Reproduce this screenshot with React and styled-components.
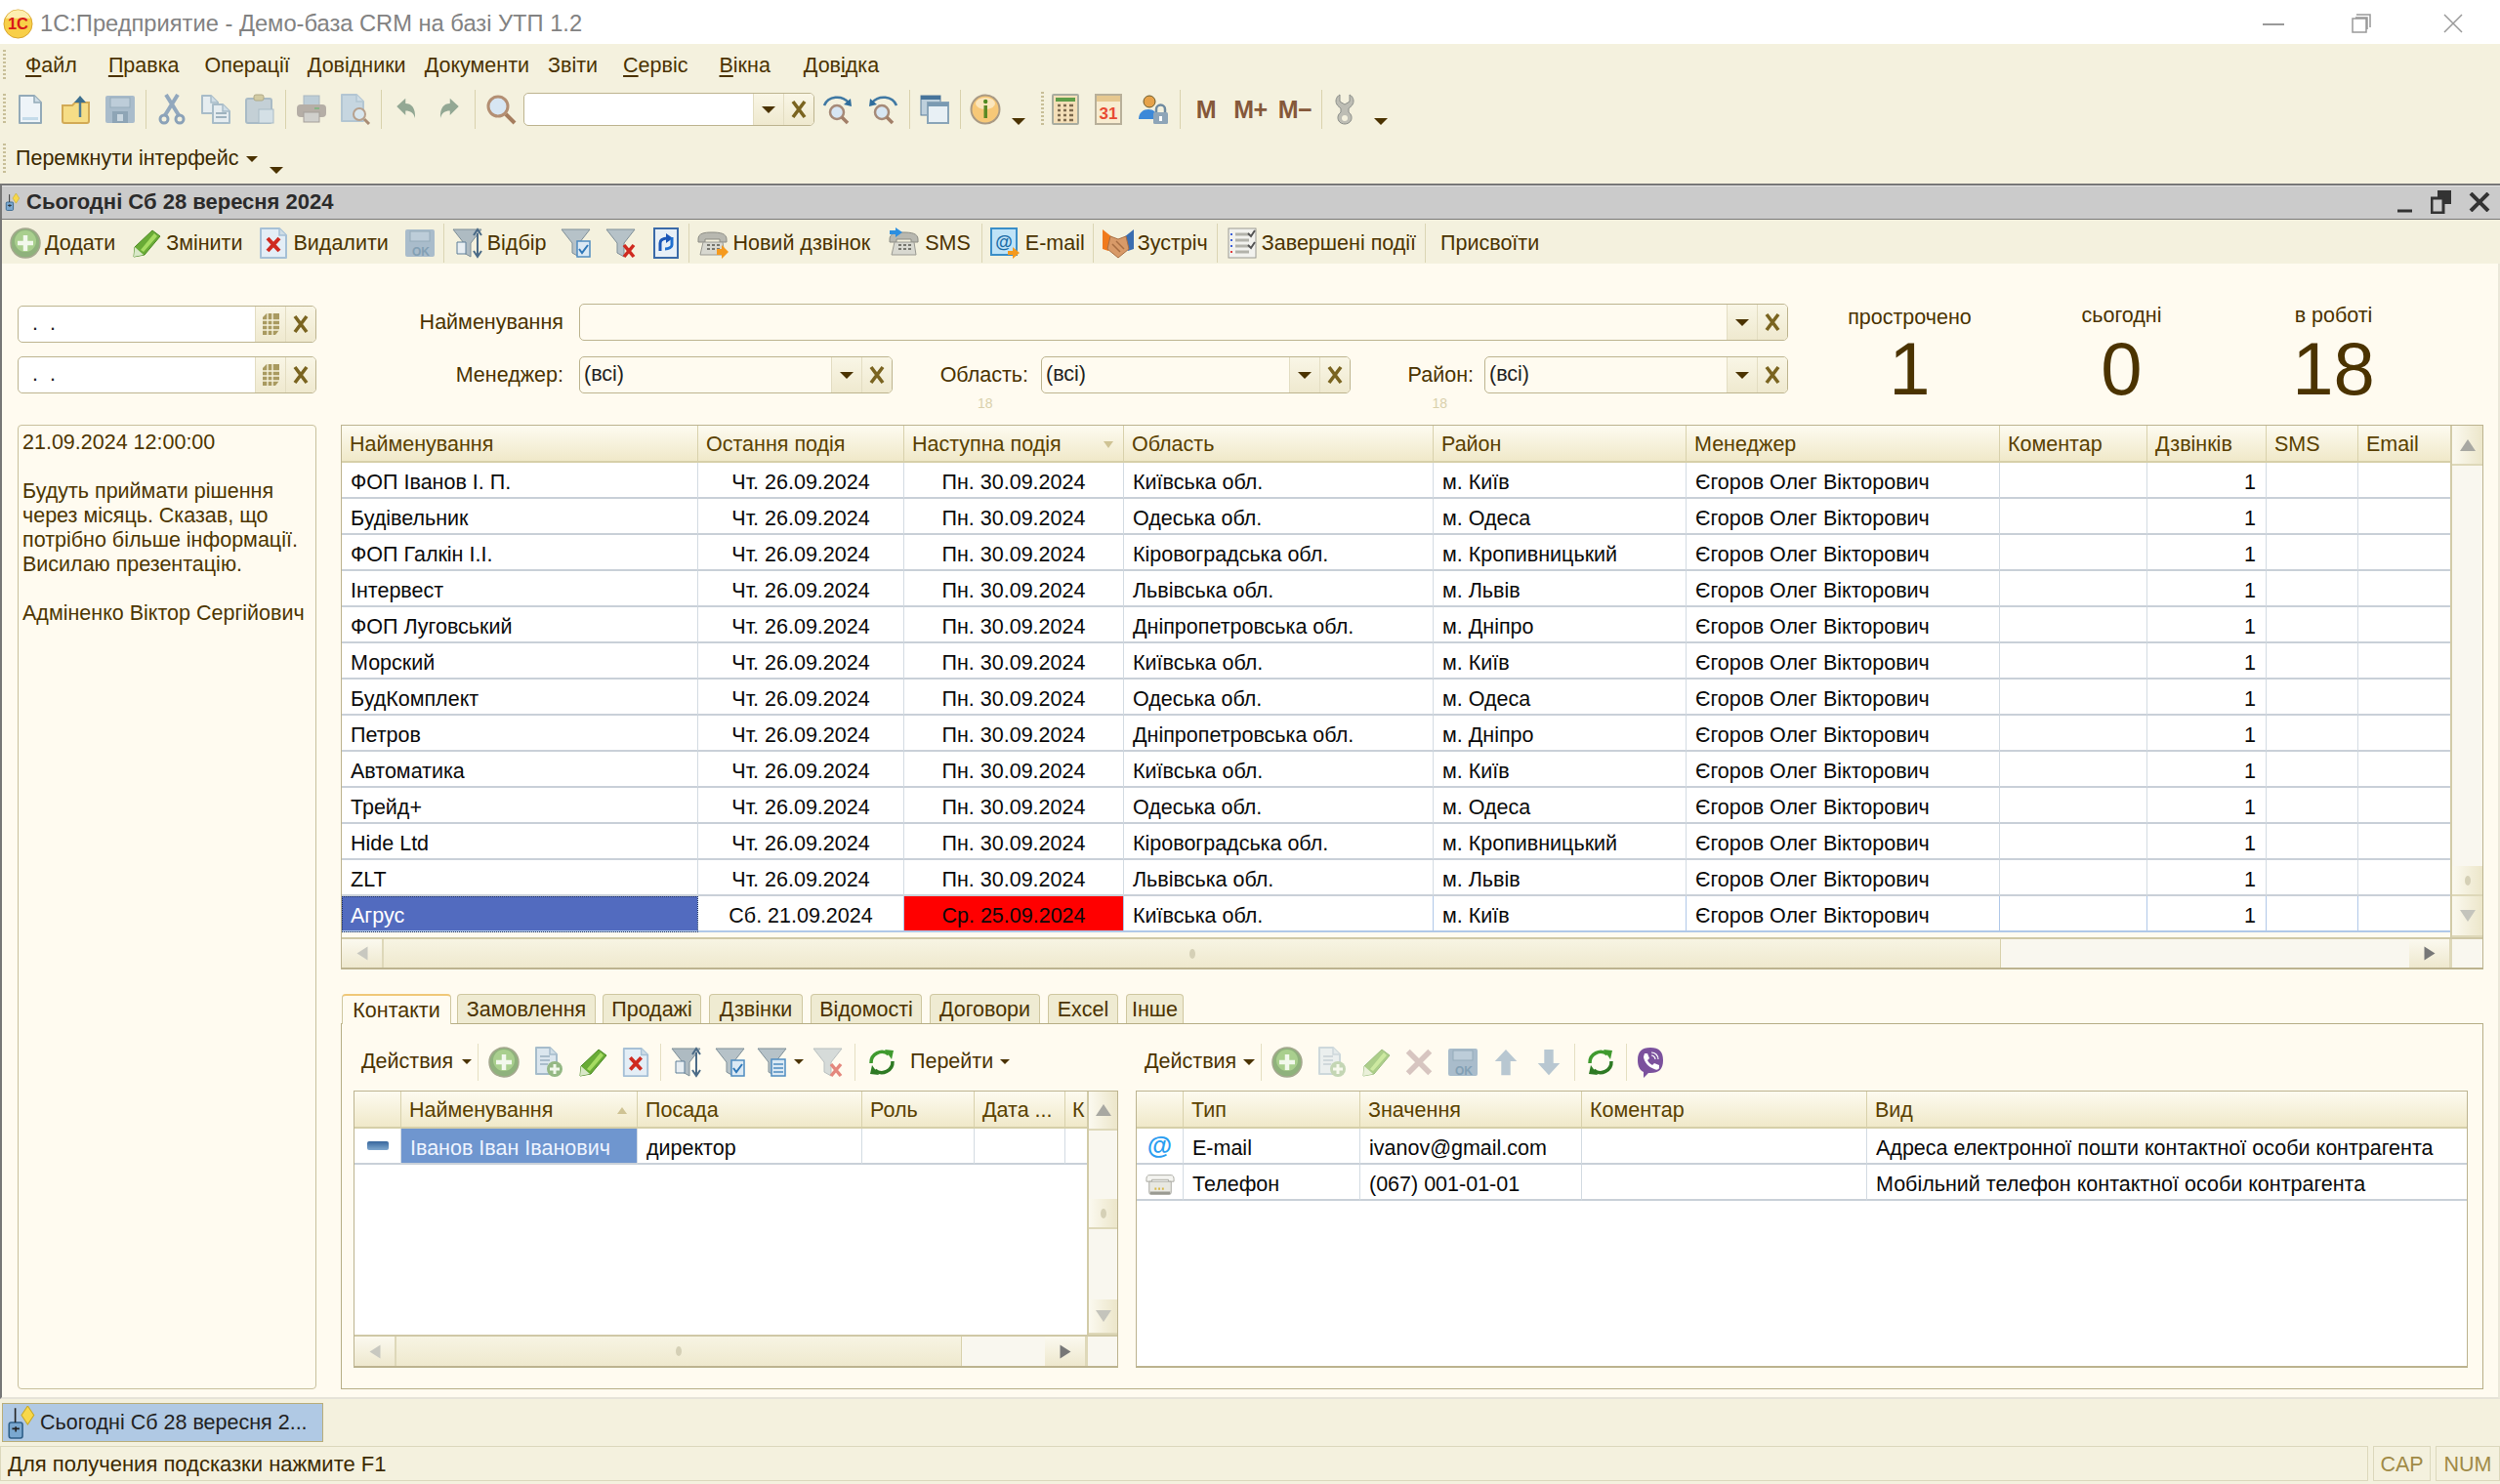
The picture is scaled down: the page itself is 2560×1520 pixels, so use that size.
import React from 'react';
import styled, { createGlobalStyle } from 'styled-components';

const GlobalStyle = createGlobalStyle`
  html, body { margin: 0; padding: 0; background: #fff; }
  * { box-sizing: border-box; }
  body { font-family: "Liberation Sans", Arial, sans-serif; font-size: 21.5px; color: #4b3300; }
`;

const Page = styled.div`
  width: 2560px;
  height: 1520px;
  display: flex;
  flex-direction: column;
  overflow: hidden;
`;

const TitleBar = styled.div`
  height: 45px;
  background: #fff;
  display: flex;
  align-items: center;
  padding: 3px 0 0 3px;
  color: #828282;
  font-size: 23.7px;
`;
const TitleText = styled.span`
  margin-left: 7px;
  flex: 1;
`;
const WinButtons = styled.div`
  display: flex;
  align-items: center;
`;
const WinBtn = styled.div`
  width: ${p => p.$w}px;
  display: flex;
  justify-content: center;
`;

const MenuBar = styled.div`
  height: 43px;
  background: #f4f1de;
  display: flex;
  align-items: center;
  padding: 1px 0 0 3px;
`;
const Grip = styled.span`
  width: 3px;
  height: ${p => p.$h || 32}px;
  flex: none;
  background: repeating-linear-gradient(to bottom, #c8bf98 0 2px, transparent 2px 4px);
`;
const MenuItem = styled.span`
  margin-left: ${p => p.$ml}px;
  color: #4b3300;
  u { text-underline-offset: 3px; }
`;

const ToolBar = styled.div`
  height: 48px;
  background: #f4f1de;
  display: flex;
  align-items: center;
  padding-left: 3px;
`;
const ToolCell = styled.div`
  width: ${p => p.$w || 45}px;
  height: 34px;
  flex: none;
  display: flex;
  align-items: center;
  justify-content: center;
`;
const ToolSep = styled.span`
  width: ${p => p.$w || 8}px;
  height: 40px;
  flex: none;
  position: relative;
  &::after {
    content: '';
    position: absolute;
    left: 50%;
    top: 0;
    bottom: 0;
    width: 1px;
    background: #d9d2ad;
  }
`;
const Memo = styled.span`
  font-weight: bold;
  font-size: 25px;
  color: #85583a;
  letter-spacing: -0.5px;
`;
const Caret = styled.span`
  display: inline-block;
  flex: none;
  width: 0;
  height: 0;
  border-left: ${p => p.$s || 6}px solid transparent;
  border-right: ${p => p.$s || 6}px solid transparent;
  border-top: ${p => p.$s || 6}px solid ${p => p.$color || '#4b3300'};
  margin-left: ${p => p.$ml || 0}px;
  margin-top: ${p => p.$mt || 0}px;
`;
const SortMark = styled.span`
  flex: none;
  width: 0;
  height: 0;
  border-left: 5px solid transparent;
  border-right: 5px solid transparent;
  border-${p => (p.$up ? 'bottom' : 'top')}: 7px solid #cfc394;
`;

const SwitchBar = styled.div`
  height: 52px;
  background: #f4f1de;
  display: flex;
  align-items: center;
  padding: 1px 0 0 3px;
`;
const SwitchText = styled.span`
  margin-left: 10px;
  color: #3c2a00;
`;

const WinHeader = styled.div`
  height: 37px;
  background: #cbcbcb;
  border-top: 2px solid #777;
  box-shadow: inset 0 1px 0 #e6e6e6;
  border-bottom: 1px solid #777;
  border-left: 2px solid #777;
  display: flex;
  align-items: center;
  padding: 0 0 0 2px;
`;
const WinTitle = styled.span`
  font-weight: bold;
  font-size: 22px;
  color: #2b2b2b;
  margin-left: 5px;
  flex: 1;
`;

const CommandBar = styled.div`
  height: 45px;
  background: #f4f1de;
  border-left: 2px solid #777;
  display: flex;
  align-items: center;
  padding-top: 3px;
`;
const CmdButton = styled.div`
  display: flex;
  align-items: center;
  gap: ${p => p.$gap ?? 4}px;
  padding: 0 ${p => p.$pad ?? 8}px;
  color: #4b3300;
  white-space: nowrap;
`;
const CmdSep = styled.span`
  width: 1px;
  height: 40px;
  flex: none;
  background: #dbd5b4;
`;

const Body = styled.div`
  height: 1163px;
  background: #fffbf0;
  border-left: 2px solid #777;
  border-right: 2px solid #ebe8da;
  border-bottom: 2px solid #e6e3d8;
  padding: 41px 15px 0 16px;
  display: grid;
  grid-template-columns: 306px 2194px;
  column-gap: 25px;
  align-items: start;
`;
const LeftCol = styled.div`
  display: flex;
  flex-direction: column;
  padding-top: 2px;
`;
const Field = styled.div`
  width: ${p => p.$w}px;
  height: ${p => p.$h || 38}px;
  flex: none;
  display: flex;
  background: ${p => p.$bg || '#fff'};
  border: 1px solid #bdb48f;
  border-radius: 5px;
  margin-top: ${p => p.$mt || 0}px;
  overflow: hidden;
`;
const FieldText = styled.span`
  flex: 1;
  padding: 0 ${p => p.$pad ?? 4}px;
  line-height: ${p => p.$lh || 35}px;
  color: #222;
  white-space: pre;
`;
const FieldBtn = styled.span`
  width: 31px;
  flex: none;
  display: flex;
  align-items: center;
  justify-content: center;
  border-left: 1px solid #e3ddc2;
  background: linear-gradient(to bottom, #f9f6e6, #efe9cf);
`;
const NotePanel = styled.div`
  margin-top: 32px;
  height: 988px;
  border: 1px solid #c8c09c;
  border-radius: 4px;
  padding: 5px 0 0 4px;
  line-height: 25px;
  color: #4d3600;
`;
const NoteLine = styled.div`
  min-height: 25px;
  white-space: nowrap;
`;

const MainCol = styled.div`
  display: flex;
  flex-direction: column;
`;
const TopArea = styled.div`
  height: 124px;
  display: flex;
`;
const FilterForm = styled.div`
  width: 1482px;
  flex: none;
`;
const FilterRow = styled.div`
  display: flex;
  align-items: center;
  margin-top: ${p => p.$mt || 0}px;
`;
const FilterLabel = styled.span`
  width: ${p => p.$w}px;
  flex: none;
  text-align: right;
  padding-right: ${p => p.$pr}px;
  white-space: nowrap;
  color: #4b3300;
`;
const HintRow = styled.div`
  display: flex;
  padding-left: 652px;
  margin-top: 3px;
  font-size: 14px;
  line-height: 14px;
  color: #d9d0ab;
`;
const Hint = styled.span`
  margin-right: 450px;
`;
const Stats = styled.div`
  margin-left: 16px;
  display: grid;
  grid-template-columns: repeat(3, 217px);
`;
const Stat = styled.div`
  display: flex;
  flex-direction: column;
  align-items: center;
  padding-top: ${p => p.$pt || 0}px;
`;
const StatLabel = styled.span`
  line-height: 24px;
  color: #4b3300;
`;
const StatValue = styled.span`
  font-size: 76px;
  line-height: 84px;
  margin-top: ${p => p.$mt}px;
  color: #4b3300;
`;

const TableBox = styled.div`
  display: flex;
  flex-direction: column;
  width: ${p => p.$w}px;
  height: ${p => p.$h}px;
  background: ${p => p.$bg || '#fff'};
  border: 2px solid #bcb38f;
  border-width: 1px 1px 2px 1px;
  overflow: hidden;
`;
const TableMain = styled.div`
  flex: 1;
  min-height: 0;
  display: flex;
`;
const TableRows = styled.div`
  flex: 1;
  min-width: 0;
  background: ${p => p.$bg || '#fff'};
`;
const HeadRow = styled.div`
  display: grid;
  grid-template-columns: ${p => p.$cols};
  height: ${p => p.$h || 38}px;
  background: linear-gradient(to bottom, #fdfbf0, #f0e9c9);
  border-bottom: 2px solid #d6cfa8;
`;
const HeadCell = styled.div`
  display: flex;
  align-items: center;
  justify-content: space-between;
  padding: 3px 10px 0 ${p => p.$pl ?? 8}px;
  border-right: 1px solid #d8d1ac;
  color: #5a4100;
  white-space: nowrap;
  overflow: hidden;
  &:last-child { border-right: 0; }
`;
const DataRow = styled.div`
  display: grid;
  grid-template-columns: ${p => p.$cols};
  height: 37px;
`;
const DataCell = styled.div`
  display: flex;
  align-items: center;
  justify-content: ${p => p.$align || 'flex-start'};
  padding: 5px ${p => (p.$align === 'flex-end' ? 10 : 9)}px 0 9px;
  background: ${p => p.$bg || 'transparent'};
  color: ${p => p.$color || '#0a0a0a'};
  border-right: 1px solid ${p => (p.$active ? '#b0c8e8' : '#d3dbe2')};
  border-bottom: 2px solid ${p => (p.$active ? '#b0c8e8' : '#c9d0d8')};
  outline: ${p => (p.$focus ? '1px dotted #20305f' : '0')};
  outline-offset: -1px;
  white-space: nowrap;
  overflow: hidden;
  &:last-child { border-right: 0; }
`;

const VBar = styled.div`
  width: ${p => p.$w}px;
  flex: none;
  display: flex;
  flex-direction: column;
  background: #f9f7ef;
  border-left: 2px solid #d2cba8;
`;
const ScrollBtn = styled.div`
  height: ${p => p.$h}px;
  flex: none;
  display: flex;
  align-items: center;
  justify-content: center;
  background: linear-gradient(to right, #fbf9ef, #ece6ca);
  border-bottom: 2px solid #ded8b9;
`;
const ScrollGap = styled.div`
  flex: ${p => (p.$h !== undefined ? 'none' : 1)};
  height: ${p => (p.$h !== undefined ? `${p.$h}px` : 'auto')};
`;
const HBar = styled.div`
  height: ${p => p.$h}px;
  flex: none;
  display: flex;
  background: #f9f7ef;
  border-top: 2px solid #cfc8a6;
`;
const HBtn = styled.div`
  width: ${p => p.$w}px;
  flex: none;
  display: flex;
  align-items: center;
  justify-content: center;
  background: linear-gradient(to bottom, #fbf9ef, #eee8ce);
  border-right: 2px solid #ded8b9;
`;
const HThumb = styled.div`
  width: ${p => p.$w}px;
  flex: none;
  display: flex;
  align-items: center;
  justify-content: center;
  background: linear-gradient(to bottom, #f7f4e3, #efe9ce);
  border-right: 1px solid #d8d1ac;
`;
const HCorner = styled.div`
  flex: 1;
`;
const ScrollCorner = styled.div`
  width: ${p => p.$w}px;
  flex: none;
  background: #f9f7ef;
  border-left: 1px solid #ded8b9;
`;
const GripDot = styled.span`
  width: 6px;
  height: 10px;
  border-radius: 50%;
  background: #d5d0b6;
`;
const ScrollArrow = styled.span`
  width: 0;
  height: 0;
  border-left: ${p => p.$size}px solid transparent;
  border-right: ${p => p.$size}px solid transparent;
  border-bottom: ${p => p.$size * 1.6}px solid ${p => p.$color || '#a8a8a2'};
  transform: rotate(${p => p.$rot || 0}deg);
`;

const TabStrip = styled.div`
  margin-top: 25px;
  height: 30px;
  display: flex;
  padding-left: 1px;
`;
const Tab = styled.div`
  width: ${p => p.$w}px;
  margin-right: ${p => p.$mr}px;
  margin-bottom: ${p => (p.$active ? '-1px' : '0')};
  padding-top: 2px;
  background: ${p => (p.$active ? '#fffbf0' : '#efebd2')};
  border: 1px solid #cfc7a0;
  border-top: ${p => (p.$active ? '2px solid #f0c878' : '1px solid #cfc7a0')};
  border-bottom: 0;
  border-radius: 4px 4px 0 0;
  display: flex;
  align-items: center;
  justify-content: center;
  color: #4b3300;
  white-space: nowrap;
  position: relative;
  z-index: ${p => (p.$active ? 1 : 0)};
`;
const TabPanel = styled.div`
  height: 375px;
  border: 1px solid #b7ae86;
  padding: 0 15px 20px 12px;
  display: grid;
  grid-template-columns: 783px 1364px;
  column-gap: 18px;
`;
const SubPane = styled.div`
  display: flex;
  flex-direction: column;
`;
const SubTools = styled.div`
  height: 68px;
  display: flex;
  align-items: center;
  padding-top: 9px;
`;
const SubBtn = styled.div`
  width: ${p => p.$w}px;
  height: 34px;
  flex: none;
  display: flex;
  align-items: center;
  justify-content: ${p => p.$justify || 'center'};
  padding-left: ${p => p.$pl || 0}px;
  color: #4b3300;
  white-space: nowrap;
`;
const SubSep = styled.span`
  width: 1px;
  height: 38px;
  flex: none;
  margin: 0 ${p => p.$m ?? 5}px;
  background: #e5dfc2;
`;
const AtSign = styled.span`
  color: #2a9df0;
  font-weight: bold;
  font-size: 26px;
  margin-top: -5px;
`;
const RowMarker = styled.span`
  width: 22px;
  height: 9px;
  margin-top: -5px;
  border-radius: 2px;
  background: linear-gradient(to bottom, #37669c, #7fa8cf);
`;

const TaskBar = styled.div`
  height: 47px;
  background: #f4f1de;
  padding: 4px 0 3px 2px;
`;
const TaskTab = styled.div`
  width: 329px;
  height: 40px;
  background: #b0c9e4;
  border: 1px solid #b9ae7a;
  display: flex;
  align-items: center;
  padding-left: 2px;
  color: #222;
  gap: 2px;
  white-space: nowrap;
`;
const StatusBar = styled.div`
  height: 40px;
  background: #f4f1de;
  display: flex;
  padding: 1px 0 3px;
  gap: 5px;
`;
const StatusCell = styled.div`
  width: ${p => p.$w}px;
  flex: ${p => (p.$w ? 'none' : 1)};
  border: 1px solid #dcd8bc;
  display: flex;
  align-items: center;
  justify-content: ${p => (p.$w ? 'center' : 'flex-start')};
  padding: 2px 0 0 ${p => (p.$w ? 0 : 7)}px;
  font-size: ${p => (p.$w ? 21.5 : 22)}px;
  color: ${p => (p.$w ? '#a08a46' : '#3c2a00')};
`;

const Svg = styled.svg`
  flex: none;
  display: block;
  opacity: ${p => (p.$faded ? 0.55 : 1)};
`;
const Ico = ({ s = 32, faded, w, h, box = '0 0 32 32', children }) => (
  <Svg viewBox={box} width={w || s} height={h || s} $faded={faded}>{children}</Svg>
);

const Paper = ({ x = 5, y = 2, w = 22, h = 28, fill = '#eef4f8', stroke = '#93aab8' }) => (
  <>
    <path d={`M${x} ${y}h${w - 7}l7 7v${h - 7}H${x}z`} fill={fill} stroke={stroke} strokeWidth="2" strokeLinejoin="round" />
    <path d={`M${x + w - 7} ${y}v7h7`} fill="#cfdde6" stroke={stroke} strokeWidth="1.5" />
  </>
);
const NewDocIcon = () => <Ico><Paper /><path d="M8 24h16v3H8z" fill="#c4dbea" /></Ico>;
const FolderIcon = () => (
  <Ico>
    <path d="M2 12h10l3-3h14v19a2 2 0 0 1-2 2H4a2 2 0 0 1-2-2z" fill="#f6dd86" stroke="#d2aa55" strokeWidth="2" />
    <path d="M20 24V8" stroke="#4f7c96" strokeWidth="2.5" />
    <path d="M14 9l6-7 6 7z" fill="#3d6f8e" />
  </Ico>
);
const FloppyIcon = ({ ok, faded = false }) => (
  <Ico faded={faded}>
    <rect x="1" y="2" width="30" height="28" rx="2" fill="#a9bccb" />
    <rect x="6" y="4" width="20" height="10" fill="#bdcdd9" stroke="#95abba" />
    {ok ? (
      <text x="8" y="29" fontSize="12" fontWeight="bold" fill="#83a0b4" fontFamily="Liberation Sans">OK</text>
    ) : (
      <>
        <rect x="8" y="18" width="16" height="12" fill="#8ea5b6" />
        <rect x="13" y="21" width="6" height="7" fill="#c8d6df" />
      </>
    )}
  </Ico>
);
const ScissorsIcon = () => (
  <Ico>
    <path d="M10 1l13 21M22 1L9 22" stroke="#92a8bd" strokeWidth="4" />
    <circle cx="8" cy="26" r="4" fill="none" stroke="#8ba2b8" strokeWidth="3" />
    <circle cx="24" cy="26" r="4" fill="none" stroke="#8ba2b8" strokeWidth="3" />
  </Ico>
);
const CopyIcon = () => (
  <Ico>
    <Paper x={2} y={2} w={16} h={18} fill="#e6edf0" stroke="#a8bcc8" />
    <Paper x={13} y={11} w={17} h={19} fill="#e6edf0" stroke="#a8bcc8" />
    <path d="M16 20h11M16 24h11" stroke="#9fb3bf" strokeWidth="2" />
  </Ico>
);
const PasteIcon = () => (
  <Ico>
    <rect x="2" y="5" width="26" height="25" rx="2" fill="#c4d0d6" stroke="#a9bbc6" strokeWidth="2" />
    <rect x="10" y="1" width="10" height="6" rx="2" fill="#d2cba2" stroke="#b0aa88" />
    <rect x="15" y="16" width="15" height="14" fill="#d4e0e6" stroke="#a9bbc6" />
  </Ico>
);
const PrinterIcon = () => (
  <Ico>
    <rect x="8" y="2" width="16" height="10" fill="#bdcdd6" stroke="#aab8c0" />
    <rect x="1" y="11" width="30" height="13" rx="4" fill="#b5aea6" />
    <rect x="8" y="19" width="16" height="10" fill="#d0d0cc" stroke="#a5a09a" />
    <rect x="19" y="14" width="5" height="2" fill="#86b486" />
  </Ico>
);
const PreviewIcon = () => (
  <Ico>
    <Paper x={2} y={1} w={22} h={27} fill="#c6d6e0" stroke="#b3c6d2" />
    <circle cx="20" cy="21" r="6" fill="#d8e6ee" stroke="#b7a08c" strokeWidth="2" />
    <path d="M25 26l5 5" stroke="#a98d75" strokeWidth="3" />
  </Ico>
);
const UndoIcon = ({ flip }) => (
  <Ico s={24}>
    <g transform={flip ? 'matrix(-1 0 0 1 32 0)' : undefined}>
      <path d="M3 12L15 1v7c8 0 14 6 13 20-2-7-6-10-13-10v6z" fill="#93a894" />
    </g>
  </Ico>
);
const MagnifierIcon = () => (
  <Ico>
    <circle cx="13" cy="13" r="10" fill="#d7e6f3" stroke="#b38f73" strokeWidth="3" />
    <path d="M21 21l9 9" stroke="#a57d5e" strokeWidth="4" />
  </Ico>
);
const FindIcon = ({ flip }) => (
  <Ico>
    <g transform={flip ? 'matrix(-1 0 0 1 32 0)' : undefined}>
      <path d="M2 12C6 2 20 1 27 9" fill="none" stroke="#3f78a3" strokeWidth="2.5" />
      <path d="M22 11l8 2-1-8z" fill="#2f6d9c" />
    </g>
    <circle cx="15" cy="19" r="7" fill="#d7e6f3" stroke="#a68a78" strokeWidth="2.5" />
    <path d="M20 24l6 6" stroke="#a27f68" strokeWidth="3.5" />
  </Ico>
);
const WindowsIcon = () => (
  <Ico>
    <rect x="2" y="2" width="20" height="20" fill="#bed0dc" stroke="#5a7f9c" />
    <rect x="2" y="2" width="20" height="4" fill="#46739a" />
    <rect x="9" y="9" width="21" height="21" fill="#e8f0f5" stroke="#8aa5b8" strokeWidth="2" />
    <rect x="9" y="9" width="21" height="4" fill="#7a9ab2" />
  </Ico>
);
const InfoIcon = () => (
  <Ico>
    <circle cx="16" cy="16" r="14.5" fill="#f7c877" stroke="#a99a84" strokeWidth="2" />
    <ellipse cx="16" cy="10" rx="10" ry="6" fill="#fbe6bc" />
    <rect x="14.5" y="12" width="3.5" height="13" fill="#5b8a25" />
    <circle cx="16.2" cy="8" r="2.2" fill="#4f8a20" />
  </Ico>
);
const CalcIcon = () => (
  <Ico>
    <rect x="3" y="1" width="26" height="30" rx="1" fill="#f4dfb8" stroke="#a9ada0" strokeWidth="2" />
    <rect x="6" y="4" width="20" height="4" fill="#5f9e48" />
    <path d="M8 12h3M14 12h3M20 12h4M8 17h3M14 17h3M20 17h4M8 22h3M14 22h3M20 22h4M8 27h3M14 27h3M20 27h4" stroke="#7d6a4e" strokeWidth="2.5" />
  </Ico>
);
const CalendarIcon = () => (
  <Ico>
    <rect x="3" y="1" width="26" height="30" fill="#f8ecd0" stroke="#b8b09a" strokeWidth="2" />
    <rect x="4" y="2" width="24" height="6" fill="#e6c890" />
    <text x="16" y="26" textAnchor="middle" fontSize="17" fontWeight="bold" fill="#e84a32" fontFamily="Liberation Sans">31</text>
  </Ico>
);
const UserLockIcon = () => (
  <Ico>
    <circle cx="12" cy="8" r="6" fill="#e6a24a" stroke="#6b5a2a" />
    <path d="M1 26c0-7 5-10 10-10s8 3 8 6v4z" fill="#3d89d8" />
    <rect x="16" y="19" width="15" height="12" rx="1.5" fill="#8ea5b8" />
    <path d="M19 19v-3a4.5 4.5 0 0 1 9 0v3" fill="none" stroke="#6e8aa0" strokeWidth="2.5" />
    <rect x="22" y="23" width="3" height="5" fill="#fff" />
  </Ico>
);
const WrenchIcon = () => (
  <Ico>
    <path d="M11 1v7l5 3 5-3V1c4 2 5 7 3 10-1 2-3 3-4 4v4c3 2 4 6 2 9-1 2-4 3-6 3s-5-1-6-3c-2-3-1-7 2-9v-4c-1-1-3-2-4-4-2-3-1-8 3-10z" fill="#bdbdb4" stroke="#8c8f8a" />
    <circle cx="16" cy="25" r="3" fill="#f4f1de" />
  </Ico>
);
const AddIcon = ({ s = 32 }) => (
  <Ico s={s}>
    <circle cx="16" cy="16" r="15" fill="#8fb27c" stroke="#a4a88e" strokeWidth="1.5" />
    <circle cx="16" cy="14" r="11" fill="#a9cf8e" />
    <path d="M16 8v16M8 16h16" stroke="#f2f8ec" strokeWidth="4.5" />
  </Ico>
);
const PencilIcon = ({ faded }) => (
  <Ico faded={faded}>
    <path d="M22 3l8 6-16 19-11 2 1-10z" fill="#69ab36" stroke="#4c8a24" />
    <path d="M24 6l3 3-14 16-3-2z" fill="#a6dc62" />
    <path d="M4 20l9 8-10 2z" fill="#d9e8c8" />
  </Ico>
);
const DeleteIcon = ({ s = 32 }) => (
  <Ico s={s}>
    <Paper x={3} y={1} w={26} h={30} fill="#e4eef6" stroke="#a6c0d6" />
    <path d="M10 11l12 13M22 11L10 24" stroke="#cf2a20" strokeWidth="4" />
  </Ico>
);
const Funnel = ({ fill = '#b6c2c8' }) => (
  <path d="M1 2h29L19 16v14l-7-4V16z" fill={fill} stroke="#7f8f98" />
);
const FilterPickIcon = () => (
  <Ico>
    <Funnel fill="#aebbc2" />
    <path d="M5 15h9v12H5z" fill="#e8eef2" stroke="#5f7f98" />
    <path d="M26 6v22M22 24l4 6 4-6M22 8l4-6 4 6" stroke="#4a6a86" strokeWidth="2" fill="none" />
  </Ico>
);
const FilterCheckIcon = () => (
  <Ico>
    <Funnel />
    <rect x="17" y="14" width="13" height="16" fill="#dbe9f4" stroke="#4f8cc0" strokeWidth="1.5" />
    <path d="M19 22l3 4 6-8" fill="none" stroke="#2f78b8" strokeWidth="2" />
  </Ico>
);
const FilterListIcon = () => (
  <Ico>
    <Funnel />
    <rect x="15" y="13" width="14" height="17" fill="#dbe9f4" stroke="#4f8cc0" strokeWidth="1.5" />
    <path d="M17 18h10M17 22h10M17 26h10" stroke="#4f8cc0" strokeWidth="1.5" />
  </Ico>
);
const FilterOffIcon = ({ faded }) => (
  <Ico faded={faded}>
    <Funnel />
    <path d="M19 18l10 12M29 18L19 30" stroke="#cf2a20" strokeWidth="3.5" />
  </Ico>
);
const SyncIcon = () => (
  <Ico>
    <rect x="4" y="1" width="24" height="30" fill="#e8f0f7" stroke="#3a6aa8" strokeWidth="2" />
    <path d="M10 24v-8c0-3 3-5 8-5" fill="none" stroke="#1c58b8" strokeWidth="3" />
    <path d="M16 6l7 5-7 5z" fill="#1c58b8" />
    <path d="M22 10v8c0 2-3 4-7 4" fill="none" stroke="#2070d0" strokeWidth="3" />
  </Ico>
);
const PhoneIcon = ({ arrow }) => (
  <Ico>
    <path d="M1 12c0-6 6-7 14-7s15 1 15 7v3h-7v-3H8v3H1z" fill="#b8b8b0" stroke="#8c8c84" />
    <path d="M6 15h20l2 13H3z" fill="#d8d8d0" stroke="#9a9a92" />
    <path d="M10 18h3M15 18h3M20 18h3M10 22h3M15 22h3M20 22h3" stroke="#77776f" strokeWidth="2" />
    {arrow === 'orange' && <path d="M20 22h5v-4l7 7-7 7v-4h-5z" fill="#f59a1e" />}
    {arrow === 'blue' && <path d="M1 3h6V0l7 5-7 5V7H1z" fill="#2d8fe0" />}
  </Ico>
);
const DeskPhoneIcon = () => (
  <Ico s={30}>
    <path d="M4 6h24c2 0 3 2 3 4v3h-6v-2H7v2H1v-3c0-2 1-4 3-4z" fill="#f4f4f0" stroke="#a8a8a0" />
    <path d="M4 13h24v12a2 2 0 0 1-2 2H6a2 2 0 0 1-2-2z" fill="#e8e8e2" stroke="#a8a8a0" />
    <path d="M10 21h12" stroke="#d8b84a" strokeWidth="2.5" strokeDasharray="2 2" />
    <path d="M5 24h22v3H5z" fill="#9a9a92" />
  </Ico>
);
const EmailIcon = () => (
  <Ico>
    <rect x="1" y="1" width="26" height="27" fill="#bfe3f7" stroke="#3a8ec8" strokeWidth="2" />
    <text x="14" y="21" textAnchor="middle" fontSize="18" fontWeight="bold" fill="#1c6ea8" fontFamily="Liberation Sans">@</text>
    <path d="M18 24h5v-4l7 6-7 6v-4h-5z" fill="#f59a1e" />
  </Ico>
);
const HandshakeIcon = () => (
  <Ico>
    <path d="M0 2l10 8-4 14-6-2z" fill="#f07a1c" />
    <path d="M32 2L22 10l4 14 6-2z" fill="#3a6db0" />
    <path d="M8 9l8 3 8-3 3 13-11 9L5 22z" fill="#d89a68" stroke="#a86e42" />
    <path d="M10 17l8 8M14 14l8 8" stroke="#a86e42" strokeWidth="1.5" />
  </Ico>
);
const ListDoneIcon = () => (
  <Ico>
    <rect x="2" y="1" width="28" height="30" fill="#f2f2ee" stroke="#9a9a92" />
    <path d="M9 7h14M9 13h14M9 19h14M9 25h14" stroke="#b3b3ab" strokeWidth="3" />
    <path d="M5 6v2M5 12v2M5 18v2" stroke="#3c5fd8" strokeWidth="2" />
    <path d="M5 24v2" stroke="#e03c3c" strokeWidth="2" />
    <path d="M22 6l3 3 4-6M22 18l3 3 4-6" fill="none" stroke="#555" strokeWidth="2" />
  </Ico>
);
const CopyAddIcon = ({ faded }) => (
  <Ico faded={faded}>
    <Paper x={3} y={1} w={21} h={27} fill="#dbe6ee" stroke="#a6bccb" />
    <path d="M7 10h10M7 14h10M7 18h8" stroke="#9ab0c0" strokeWidth="1.5" />
    <circle cx="22" cy="23" r="8" fill="#94b884" />
    <path d="M22 18v10M17 23h10" stroke="#f2f8ec" strokeWidth="3" />
  </Ico>
);
const RecycleIcon = () => (
  <Ico>
    <path d="M5 17a11 11 0 0 1 18-9" fill="none" stroke="#3f9a2e" strokeWidth="3.5" />
    <path d="M19 3l9 1-2 9z" fill="#3f9a2e" />
    <path d="M27 15a11 11 0 0 1-18 9" fill="none" stroke="#2e7a24" strokeWidth="3.5" />
    <path d="M13 29l-9-1 2-9z" fill="#2e7a24" />
  </Ico>
);
const ArrowVIcon = ({ down }) => (
  <Ico s={30} faded>
    <g transform={down ? 'rotate(180 16 16)' : undefined}>
      <path d="M16 2l12 13h-7v15H11V15H4z" fill="#7f9db8" />
    </g>
  </Ico>
);
const ViberIcon = () => (
  <Ico>
    <path d="M16 1c9 0 13 4 13 13s-4 13-13 13h-2l-5 5v-6C5 24 3 20 3 14 3 5 7 1 16 1z" fill="#7b519d" />
    <path d="M10 7l3 0 2 5-2 2c1 2 3 4 5 5l2-2 5 2v3c-1 2-3 2-5 1-6-2-10-7-11-12 0-2 1-3 1-4z" fill="#fff" />
    <path d="M17 6c4 0 7 3 7 7M17 9c2 0 4 2 4 4" fill="none" stroke="#fff" strokeWidth="1.2" />
  </Ico>
);
const ClearGlyph = () => (
  <Ico w={16} h={20} box="0 0 16 20">
    <path d="M2 2l12 16M14 2L2 18" stroke="#7a6420" strokeWidth="3.6" />
  </Ico>
);
const GridGlyph = () => (
  <Ico w={20} h={24} box="0 0 20 24">
    <path d="M6 1h13v17l-4 5H2V5z" fill="#a99a60" />
    <path d="M2 8h17M2 13h17M2 18h17M7 1v22M12 1v22" stroke="#f6f2dc" strokeWidth="1.4" />
  </Ico>
);
const DropCaret = () => <Caret $s={7} />;
const WindowDocIcon = ({ s = 20 }) => (
  <Ico s={s}>
    <path d="M22 0l6 9-6 9-6-9z" fill="#f8d84a" stroke="#c8a828" />
    <rect x="4" y="16" width="13" height="15" rx="2" fill="#7aa8d0" stroke="#2f5f88" strokeWidth="1.5" />
    <path d="M10 2v14M7 22h7M10.5 20v5" stroke="#222" strokeWidth="1.5" fill="none" />
  </Ico>
);
const LogoIcon = () => (
  <Ico s={31}>
    <circle cx="16" cy="16" r="15" fill="#f8cf48" stroke="#d8a430" />
    <path d="M3 10a14 14 0 0 1 26 0z" fill="#fdeeb0" />
    <text x="16" y="22" textAnchor="middle" fontSize="17" fontWeight="bold" fill="#d81818" fontFamily="Liberation Sans">1С</text>
  </Ico>
);

const menu = [
  [<><u>Ф</u>айл</>, 20], [<><u>П</u>равка</>, 32], ['Операції', 26], ['Довідники', 18], ['Документи', 19],
  ['Звіти', 19], [<><u>С</u>ервіс</>, 26], [<><u>В</u>ікна</>, 32], [<>Дов<u>і</u>дка</>, 34],
];

const mainCols = '365px 211px 225px 317px 259px 321px 151px 122px 94px 95px';
const mainHead = ['Найменування', 'Остання подія', 'Наступна подія', 'Область', 'Район', 'Менеджер', 'Коментар', 'Дзвінків', 'SMS', 'Email'];
const regions = {
  k: ['Київська обл.', 'м. Київ'],
  o: ['Одеська обл.', 'м. Одеса'],
  r: ['Кіровоградська обл.', 'м. Кропивницький'],
  l: ['Львівська обл.', 'м. Львів'],
  d: ['Дніпропетровська обл.', 'м. Дніпро'],
};
const clients = [
  ['ФОП Іванов І. П.', 'k'], ['Будівельник', 'o'], ['ФОП Галкін І.І.', 'r'], ['Інтервест', 'l'],
  ['ФОП Луговський', 'd'], ['Морский', 'k'], ['БудКомплект', 'o'], ['Петров', 'd'],
  ['Автоматика', 'k'], ['Трейд+', 'o'], ['Hide Ltd', 'r'], ['ZLT', 'l'],
];
const tabs = [['Контакти', 112, 6], ['Замовлення', 142, 7], ['Продажі', 101, 8], ['Дзвінки', 96, 8], ['Відомості', 114, 8], ['Договори', 113, 8], ['Excel', 72, 8], ['Інше', 59, 0]];
const contactCols = '48px 242px 230px 115px 93px 1fr';
const methodCols = '48px 181px 227px 292px 1fr';

const VScroll = ({ w, up, topGap, thumb, midGap, down }) => (
  <VBar $w={w}>
    <ScrollBtn $h={up}><ScrollArrow $size={8} /></ScrollBtn>
    <ScrollGap $h={topGap} />
    <ScrollBtn $h={thumb}><GripDot /></ScrollBtn>
    <ScrollGap $h={midGap} />
    <ScrollBtn $h={down}><ScrollArrow $size={8} $rot={180} $color="#c4c4bc" /></ScrollBtn>
  </VBar>
);
const HScroll = ({ h, btn, thumb, corner }) => (
  <HBar $h={h}>
    <HBtn $w={btn}><ScrollArrow $size={7} $rot={270} $color="#c8c8c0" /></HBtn>
    <HThumb $w={thumb}><GripDot /></HThumb>
    <HCorner />
    <HBtn $w={btn}><ScrollArrow $size={7} $rot={90} $color="#777" /></HBtn>
    <ScrollCorner $w={corner} />
  </HBar>
);
const Clearable = ({ w, text, bg }) => (
  <Field $w={w} $bg={bg}>
    <FieldText>{text}</FieldText>
    <FieldBtn><DropCaret /></FieldBtn>
    <FieldBtn><ClearGlyph /></FieldBtn>
  </Field>
);
const DateField = ({ mt }) => (
  <Field $w={306} $mt={mt}>
    <FieldText $pad={14}>{'.  .'}</FieldText>
    <FieldBtn><GridGlyph /></FieldBtn>
    <FieldBtn><ClearGlyph /></FieldBtn>
  </Field>
);

export default function App() {
  return (
    <Page>
      <GlobalStyle />
      <TitleBar>
        <LogoIcon />
        <TitleText>1С:Предприятие - Демо-база CRM на базі УТП 1.2</TitleText>
        <WinButtons>
          <WinBtn $w={90}><Ico w={22} h={20} box="0 0 22 20"><path d="M0 11h22" stroke="#999" strokeWidth="2" /></Ico></WinBtn>
          <WinBtn $w={90}><Ico w={20} h={20} box="0 0 20 20"><path d="M4 4h12v12M1 5h14v14H1zM5 1h14v13" fill="none" stroke="#999" strokeWidth="1.5" /></Ico></WinBtn>
          <WinBtn $w={97}><Ico w={20} h={20} box="0 0 20 20"><path d="M1 1l18 18M19 1L1 19" stroke="#999" strokeWidth="1.5" /></Ico></WinBtn>
        </WinButtons>
      </TitleBar>

      <MenuBar>
        <Grip />
        {menu.map(([label, ml], i) => <MenuItem key={i} $ml={ml}>{label}</MenuItem>)}
      </MenuBar>

      <ToolBar>
        <Grip />
        <ToolCell $w={49}><NewDocIcon /></ToolCell>
        <ToolCell><FolderIcon /></ToolCell>
        <ToolCell><FloppyIcon /></ToolCell>
        <ToolSep />
        <ToolCell><ScissorsIcon /></ToolCell>
        <ToolCell><CopyIcon /></ToolCell>
        <ToolCell><PasteIcon /></ToolCell>
        <ToolSep />
        <ToolCell><PrinterIcon /></ToolCell>
        <ToolCell><PreviewIcon /></ToolCell>
        <ToolSep />
        <ToolCell $w={44}><UndoIcon /></ToolCell>
        <ToolCell $w={44}><UndoIcon flip /></ToolCell>
        <ToolSep />
        <ToolCell $w={46}><MagnifierIcon /></ToolCell>
        <Field $w={298} $h={34}>
          <FieldText />
          <FieldBtn><DropCaret /></FieldBtn>
          <FieldBtn><ClearGlyph /></FieldBtn>
        </Field>
        <ToolCell $w={47}><FindIcon /></ToolCell>
        <ToolCell $w={46}><FindIcon flip /></ToolCell>
        <ToolSep />
        <ToolCell $w={44}><WindowsIcon /></ToolCell>
        <ToolSep />
        <ToolCell $w={44}><InfoIcon /></ToolCell>
        <Caret $s={7} $mt={24} $ml={5} />
        <ToolCell $w={16} />
        <Grip $h={36} />
        <ToolCell $w={43}><CalcIcon /></ToolCell>
        <ToolCell $w={46}><CalendarIcon /></ToolCell>
        <ToolCell $w={46}><UserLockIcon /></ToolCell>
        <ToolSep />
        <ToolCell $w={46}><Memo>M</Memo></ToolCell>
        <ToolCell $w={45}><Memo>M+</Memo></ToolCell>
        <ToolCell $w={46}><Memo>M−</Memo></ToolCell>
        <ToolSep />
        <ToolCell $w={40}><WrenchIcon /></ToolCell>
        <Caret $s={7} $mt={24} $ml={10} />
      </ToolBar>

      <SwitchBar>
        <Grip />
        <SwitchText>Перемкнути інтерфейс</SwitchText>
        <Caret $s={6} $ml={7} />
        <Caret $s={7} $ml={12} $mt={24} />
      </SwitchBar>

      <WinHeader>
        <WindowDocIcon s={18} />
        <WinTitle>Сьогодні Сб 28 вересня 2024</WinTitle>
        <WinButtons>
          <WinBtn $w={36}><Ico w={15} h={22} box="0 0 15 22"><path d="M0 20h15" stroke="#333" strokeWidth="3" /></Ico></WinBtn>
          <WinBtn $w={38}><Ico w={21} h={24} box="0 0 21 24"><path d="M7 0h14v14H7z" fill="#333" /><path d="M1 8h12v15H1z" fill="#cbcbcb" stroke="#333" strokeWidth="3" /></Ico></WinBtn>
          <WinBtn $w={42}><Ico w={22} h={20} box="0 0 22 20"><path d="M2 1l18 18M20 1L2 19" stroke="#333" strokeWidth="4" /></Ico></WinBtn>
        </WinButtons>
      </WinHeader>

      <CommandBar>
        <CmdButton><AddIcon />Додати</CmdButton>
        <CmdButton><PencilIcon />Змінити</CmdButton>
        <CmdButton><DeleteIcon />Видалити</CmdButton>
        <CmdButton><FloppyIcon ok /></CmdButton>
        <CmdSep />
        <CmdButton><FilterPickIcon />Відбір</CmdButton>
        <CmdButton $pad={7}><FilterCheckIcon /></CmdButton>
        <CmdButton $pad={7}><FilterOffIcon /></CmdButton>
        <CmdButton $pad={7}><SyncIcon /></CmdButton>
        <CmdSep />
        <CmdButton><PhoneIcon arrow="orange" />Новий дзвінок</CmdButton>
        <CmdButton $pad={11} $gap={5}><PhoneIcon arrow="blue" />SMS</CmdButton>
        <CmdSep />
        <CmdButton><EmailIcon />E-mail</CmdButton>
        <CmdSep />
        <CmdButton $pad={9}><HandshakeIcon />Зустріч</CmdButton>
        <CmdSep />
        <CmdButton $pad={9}><ListDoneIcon />Завершені події</CmdButton>
        <CmdSep />
        <CmdButton $pad={15}>Присвоїти</CmdButton>
      </CommandBar>

      <Body>
        <LeftCol>
          <DateField />
          <DateField mt={14} />
          <NotePanel>
            <NoteLine>21.09.2024 12:00:00</NoteLine>
            <NoteLine />
            <NoteLine>Будуть приймати рішення</NoteLine>
            <NoteLine>через місяць. Сказав, що</NoteLine>
            <NoteLine>потрібно більше інформації.</NoteLine>
            <NoteLine>Висилаю презентацію.</NoteLine>
            <NoteLine />
            <NoteLine>Адміненко Віктор Сергійович</NoteLine>
          </NotePanel>
        </LeftCol>

        <MainCol>
          <TopArea>
            <FilterForm>
              <FilterRow>
                <FilterLabel $w={244} $pr={16}>Найменування</FilterLabel>
                <Clearable w={1238} bg="#fffbf0" />
              </FilterRow>
              <FilterRow $mt={16}>
                <FilterLabel $w={244} $pr={16}>Менеджер:</FilterLabel>
                <Clearable w={321} bg="#fffbf0" text="(всі)" />
                <FilterLabel $w={152} $pr={13}>Область:</FilterLabel>
                <Clearable w={317} bg="#fffbf0" text="(всі)" />
                <FilterLabel $w={137} $pr={11}>Район:</FilterLabel>
                <Clearable w={311} bg="#fffbf0" text="(всі)" />
              </FilterRow>
              <HintRow><Hint>18</Hint><Hint>18</Hint></HintRow>
            </FilterForm>
            <Stats>
              <Stat $pt={2}><StatLabel>прострочено</StatLabel><StatValue $mt={-1}>1</StatValue></Stat>
              <Stat><StatLabel>сьогодні</StatLabel><StatValue $mt={1}>0</StatValue></Stat>
              <Stat><StatLabel>в роботі</StatLabel><StatValue $mt={1}>18</StatValue></Stat>
            </Stats>
          </TopArea>

          <TableBox $w={2194} $h={558} $bg="#fffbf0">
            <TableMain>
              <TableRows $bg="#fffbf0">
                <HeadRow $cols={mainCols}>
                  {mainHead.map(h => (
                    <HeadCell key={h}>
                      {h}
                      {h === 'Наступна подія' && <SortMark />}
                    </HeadCell>
                  ))}
                </HeadRow>
                {clients.map(([name, r]) => (
                  <DataRow key={name} $cols={mainCols}>
                    <DataCell $bg="#fff">{name}</DataCell>
                    <DataCell $bg="#fff" $align="center">Чт. 26.09.2024</DataCell>
                    <DataCell $bg="#fff" $align="center">Пн. 30.09.2024</DataCell>
                    <DataCell $bg="#fff">{regions[r][0]}</DataCell>
                    <DataCell $bg="#fff">{regions[r][1]}</DataCell>
                    <DataCell $bg="#fff">Єгоров Олег Вікторович</DataCell>
                    <DataCell $bg="#fff" />
                    <DataCell $bg="#fff" $align="flex-end">1</DataCell>
                    <DataCell $bg="#fff" />
                    <DataCell $bg="#fff" />
                  </DataRow>
                ))}
                <DataRow $cols={mainCols}>
                  <DataCell $bg="#526bbf" $color="#fff" $active $focus>Агрус</DataCell>
                  <DataCell $bg="#fff" $active $align="center">Сб. 21.09.2024</DataCell>
                  <DataCell $bg="#ff0000" $active $align="center">Ср. 25.09.2024</DataCell>
                  <DataCell $bg="#fff" $active>Київська обл.</DataCell>
                  <DataCell $bg="#fff" $active>м. Київ</DataCell>
                  <DataCell $bg="#fff" $active>Єгоров Олег Вікторович</DataCell>
                  <DataCell $bg="#fff" $active />
                  <DataCell $bg="#fff" $active $align="flex-end">1</DataCell>
                  <DataCell $bg="#fff" $active />
                  <DataCell $bg="#fff" $active />
                </DataRow>
              </TableRows>
              <VScroll w={33} up={41} thumb={31} midGap={0} down={42} />
            </TableMain>
            <HScroll h={31} btn={43} thumb={1656} corner={32} />
          </TableBox>

          <TabStrip>
            {tabs.map(([t, w, mr], i) => <Tab key={t} $w={w} $mr={mr} $active={i === 0}>{t}</Tab>)}
          </TabStrip>
          <TabPanel>
            <SubPane>
              <SubTools>
                <SubBtn $w={124} $justify="flex-start" $pl={8}>Действия<Caret $s={5} $ml={9} /></SubBtn>
                <SubSep $m={3} />
                <SubBtn $w={46}><AddIcon /></SubBtn>
                <SubBtn $w={46}><CopyAddIcon /></SubBtn>
                <SubBtn $w={44}><PencilIcon /></SubBtn>
                <SubBtn $w={44}><DeleteIcon s={30} /></SubBtn>
                <SubSep $m={3} />
                <SubBtn $w={46}><FilterPickIcon /></SubBtn>
                <SubBtn $w={44}><FilterCheckIcon /></SubBtn>
                <SubBtn $w={42}><FilterListIcon /></SubBtn>
                <Caret $s={5} $ml={1} />
                <SubBtn $w={50}><FilterOffIcon faded /></SubBtn>
                <SubSep $m={2} />
                <SubBtn $w={50}><RecycleIcon /></SubBtn>
                <SubBtn $w={108} $justify="flex-start" $pl={4}>Перейти<Caret $s={5} $ml={7} /></SubBtn>
              </SubTools>
              <TableBox $w={783} $h={284}>
                <TableMain>
                  <TableRows>
                    <HeadRow $cols={contactCols}>
                      <HeadCell />
                      <HeadCell>Найменування<SortMark $up /></HeadCell>
                      <HeadCell>Посада</HeadCell>
                      <HeadCell>Роль</HeadCell>
                      <HeadCell>Дата ...</HeadCell>
                      <HeadCell $pl={7}>К</HeadCell>
                    </HeadRow>
                    <DataRow $cols={contactCols}>
                      <DataCell $align="center"><RowMarker /></DataCell>
                      <DataCell $bg="#6f96cf" $color="#eef4ff">Іванов Іван Іванович</DataCell>
                      <DataCell>директор</DataCell>
                      <DataCell />
                      <DataCell />
                      <DataCell />
                    </DataRow>
                  </TableRows>
                  <VScroll w={31} up={40} topGap={70} thumb={31} down={36} />
                </TableMain>
                <HScroll h={32} btn={43} thumb={579} corner={31} />
              </TableBox>
            </SubPane>

            <SubPane>
              <SubTools>
                <SubBtn $w={125} $justify="flex-start" $pl={9}>Действия<Caret $s={6} $ml={7} /></SubBtn>
                <SubSep $m={3} />
                <SubBtn $w={46}><AddIcon /></SubBtn>
                <SubBtn $w={46}><CopyAddIcon faded /></SubBtn>
                <SubBtn $w={44}><PencilIcon faded /></SubBtn>
                <SubBtn $w={44}><Ico s={30} faded><path d="M4 4l24 24M28 4L4 28" stroke="#b89a9a" strokeWidth="6" /></Ico></SubBtn>
                <SubBtn $w={45}><FloppyIcon ok /></SubBtn>
                <SubBtn $w={44}><ArrowVIcon /></SubBtn>
                <SubBtn $w={44}><ArrowVIcon down /></SubBtn>
                <SubSep $m={4} />
                <SubBtn $w={44}><RecycleIcon /></SubBtn>
                <SubSep $m={4} />
                <SubBtn $w={40}><ViberIcon /></SubBtn>
              </SubTools>
              <TableBox $w={1364} $h={284}>
                <TableRows>
                  <HeadRow $cols={methodCols}>
                    <HeadCell />
                    <HeadCell>Тип</HeadCell>
                    <HeadCell>Значення</HeadCell>
                    <HeadCell>Коментар</HeadCell>
                    <HeadCell>Вид</HeadCell>
                  </HeadRow>
                  <DataRow $cols={methodCols}>
                    <DataCell $align="center"><AtSign>@</AtSign></DataCell>
                    <DataCell>E-mail</DataCell>
                    <DataCell>ivanov@gmail.com</DataCell>
                    <DataCell />
                    <DataCell>Адреса електронної пошти контактної особи контрагента</DataCell>
                  </DataRow>
                  <DataRow $cols={methodCols}>
                    <DataCell $align="center"><DeskPhoneIcon /></DataCell>
                    <DataCell>Телефон</DataCell>
                    <DataCell>(067) 001-01-01</DataCell>
                    <DataCell />
                    <DataCell>Мобільний телефон контактної особи контрагента</DataCell>
                  </DataRow>
                </TableRows>
              </TableBox>
            </SubPane>
          </TabPanel>
        </MainCol>
      </Body>

      <TaskBar>
        <TaskTab><WindowDocIcon s={34} />Сьогодні Сб 28 вересня 2...</TaskTab>
      </TaskBar>
      <StatusBar>
        <StatusCell>Для получения подсказки нажмите F1</StatusCell>
        <StatusCell $w={59}>CAP</StatusCell>
        <StatusCell $w={66}>NUM</StatusCell>
      </StatusBar>
    </Page>
  );
}
